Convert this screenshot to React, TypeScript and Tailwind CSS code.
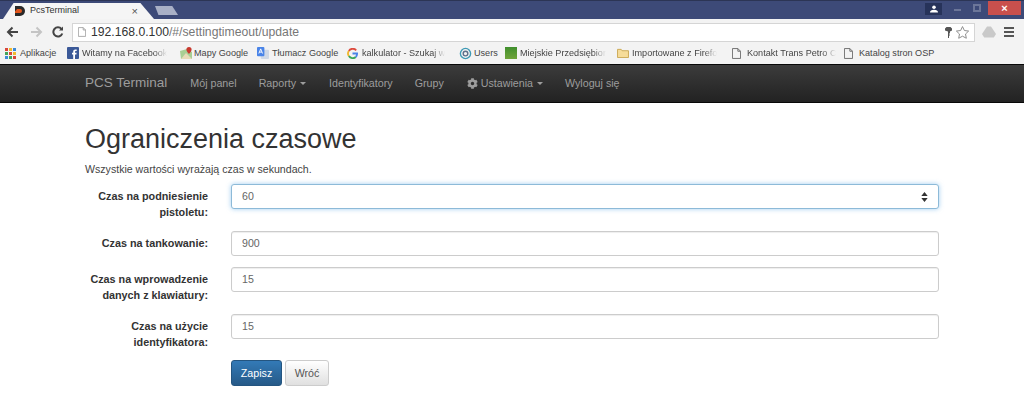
import { FaCog } from "react-icons/fa";

const font = "font-['Liberation_Sans',Arial,sans-serif]";

const bookmarks = [
  { name: "Aplikacje", width: "w-[62px]", icon: "apps" },
  { name: "Witamy na Facebook", width: "w-[112px]", icon: "fb", fade: true },
  { name: "Mapy Google", width: "w-[78px]", icon: "maps" },
  { name: "Tłumacz Google", width: "w-[90px]", icon: "translate" },
  { name: "kalkulator - Szukaj w", width: "w-[112px]", icon: "g", fade: true },
  { name: "Users", width: "w-[46px]", icon: "users" },
  { name: "Miejskie Przedsiębior", width: "w-[112px]", icon: "green", fade: true },
  { name: "Importowane z Firefo", width: "w-[115px]", icon: "folder", fade: true },
  { name: "Kontakt Trans Petro C", width: "w-[112px]", icon: "page", fade: true },
  { name: "Katalog stron OSP", width: "w-[100px]", icon: "page" },
];

function BookmarkIcon({ type }: { type: string }) {
  if (type === "apps") {
    const colors = ["#d9463a", "#f0b92f", "#3d8ad9", "#44a35a", "#d9463a", "#f0b92f", "#3d8ad9", "#44a35a", "#d9463a"];
    return (
      <svg width="11" height="11" viewBox="0 0 11 11">
        {colors.map((c, i) => (
          <rect key={i} x={(i % 3) * 4} y={Math.floor(i / 3) * 4} width="3" height="3" fill={c} />
        ))}
      </svg>
    );
  }
  if (type === "fb") {
    return (
      <svg width="12" height="12" viewBox="0 0 12 12">
        <rect width="12" height="12" rx="1" fill="#3b5998" />
        <path d="M8 12V7.4h1.4l.2-1.7H8V4.7c0-.5.2-.8.8-.8h.9V2.4H8.4C7 2.4 6.2 3.2 6.2 4.6v1.1H5v1.7h1.2V12z" fill="#fff" />
      </svg>
    );
  }
  if (type === "maps") {
    return (
      <svg width="14" height="14" viewBox="0 0 14 14">
        <path d="M1 5l7-2 5 3v7H2z" fill="#a9cf94" />
        <path d="M2 13l5-6 6 6z" fill="#e8dcb8" />
        <path d="M10 1a2.6 2.6 0 0 1 2.6 2.6C12.6 5.4 10 8 10 8S7.4 5.4 7.4 3.6A2.6 2.6 0 0 1 10 1z" fill="#c8392f" />
      </svg>
    );
  }
  if (type === "translate") {
    return (
      <svg width="12" height="13" viewBox="0 0 13 14">
        <rect x="4" y="3" width="9" height="10" rx="1" fill="#cfd8e6" />
        <rect x="0" y="0" width="8" height="10" rx="1" fill="#4a84e8" />
        <path d="M2 7l2-5 2 5M2.8 5.5h2.4" stroke="#fff" fill="none" />
      </svg>
    );
  }
  if (type === "g") {
    return (
      <svg width="11" height="11" viewBox="0 0 12 12" fill="none" strokeWidth="2">
        <path d="M10 2.500A5 5 0 0 0 2 3.200" stroke="#dd4b3e" />
        <path d="M2 3.200a5 5 0 0 0 0 5.600" stroke="#f1b82d" />
        <path d="M2 8.800a5 5 0 0 0 7.500 1" stroke="#3aa757" />
        <path d="M9.500 9.800A5 5 0 0 0 11 6H6" stroke="#4a84e8" />
      </svg>
    );
  }
  if (type === "users") {
    return (
      <svg width="13" height="13" viewBox="0 0 14 14" fill="none">
        <circle cx="7" cy="7" r="5.500" stroke="#3f9ab5" strokeWidth="1.500" />
        <circle cx="7" cy="7" r="2.500" stroke="#5c6f8a" strokeWidth="1.500" />
      </svg>
    );
  }
  if (type === "green") {
    return <div className="h-3 w-3 bg-gradient-to-b from-[#3f8f2d] to-[#6fa33a]" />;
  }
  if (type === "folder") {
    return (
      <svg width="12" height="10" viewBox="0 0 13 11">
        <path d="M.5 1.500h4l1 1.500h7v7.500H.5z" fill="#f6dc9a" stroke="#c9a650" />
      </svg>
    );
  }
  return (
    <svg width="9" height="11" viewBox="0 0 10 12" fill="none" stroke="#666">
      <path d="M.5.500h6l3 3v8h-9zM6.500.500v3h3" />
    </svg>
  );
}

function Caret() {
  return <span className="ml-[1px] border-x-[3px] border-t-[3px] border-x-transparent border-t-[#9d9d9d]" />;
}

function Field({ label, value, focused, rowClass }: { label: React.ReactNode; value: string; focused?: boolean; rowClass: string }) {
  return (
    <div className={`flex items-start ${rowClass}`}>
      <label className="mr-[23px] w-[123px] whitespace-nowrap pt-[4px] text-right text-[10.8px] font-bold leading-[16px] text-[#333]">
        {label}
      </label>
      <div className="relative w-[708px]">
        <input
          readOnly
          value={value}
          className={
            focused
              ? "block h-[25px] w-full rounded-[3px] border border-[#8dbad8] bg-white px-[10px] pb-[2px] text-[10.6px] text-[#666] shadow-[0_0_5px_rgba(102,175,233,0.6)] outline-none"
              : "block h-[25px] w-full rounded-[3px] border border-[#ccc] bg-white px-[10px] pb-[2px] text-[10.6px] text-[#666] shadow-[inset_0_1px_1px_rgba(0,0,0,0.07)] outline-none"
          }
        />
        {focused && (
          <svg width="7" height="10" viewBox="0 0 7 11" className="absolute right-[11px] top-[8px]" fill="#333">
            <path d="M3.500 0L7 4.300H0zM3.500 11L0 6.700h7z" />
          </svg>
        )}
      </div>
    </div>
  );
}

export default function App() {
  return (
    <div className={`h-[402px] w-[1024px] overflow-hidden bg-white ${font}`}>
      {/* browser title bar */}
      <div className="flex h-[19px] items-end justify-between border-t border-[#2c3555] bg-[#3d4a78] pl-[3px]">
        <div className="flex items-end">
          <div className="flex h-[16px] w-[151px] items-center bg-[#f5f5f5] pl-[11px] pr-[16px] [clip-path:polygon(0_100%,7%_0,91%_0,100%_100%)]">
            <svg width="12" height="12" viewBox="0 0 12 12" className="shrink-0">
              <path d="M1 1h5a5 5 0 0 1 0 10H1z" fill="#2a2a2a" />
              <path d="M3 4h3a2 2 0 0 1 0 4H1V6.500z" fill="#e2561d" />
            </svg>
            <span className="ml-[4px] flex-1 text-[9px] text-[#333]">PcsTerminal</span>
            <span className="text-[11px] leading-none text-[#555]">×</span>
          </div>
          <div className="mb-[4px] ml-[1px] h-[9px] w-[23px] bg-[#a9b0c6] [clip-path:polygon(0_0,75%_0,100%_100%,15%_100%)]" />
        </div>
        <div className="flex h-[18px] items-start">
          <div className="mr-[5px] mt-[2px] flex h-[12px] w-[17px] items-center justify-center bg-[#27335a]">
            <svg width="8" height="8" viewBox="0 0 8 8" fill="#fff">
              <circle cx="4" cy="2.200" r="1.800" />
              <path d="M0 7.500c0-2 1.500-2.800 4-2.800s4 .8 4 2.800z" />
            </svg>
          </div>
          <div className="flex h-[14px] w-[20px] items-center justify-center">
            <div className="mt-[4px] h-[2px] w-[7px] bg-[#6c7699]" />
          </div>
          <div className="mr-px flex h-[14px] w-[20px] items-center justify-center">
            <div className="h-[8px] w-[8px] border-2 border-[#6c7699]" />
          </div>
          <div className="mr-[3px] flex h-[14px] w-[33px] items-center justify-center bg-[#c9504d] text-[11px] font-bold leading-none text-white">
            ×
          </div>
        </div>
      </div>

      {/* browser toolbar */}
      <div className="flex h-[26px] items-center bg-[#f3f3f3] pl-[6px] pr-[10px]">
        <svg width="14" height="12" viewBox="0 0 14 12" fill="none" stroke="#444" strokeWidth="2" className="shrink-0">
          <path d="M12 6H2M6.500 1.500L2 6l4.500 4.500" />
        </svg>
        <svg width="14" height="12" viewBox="0 0 14 12" fill="none" stroke="#c4c4c4" strokeWidth="2" className="ml-[9px] shrink-0">
          <path d="M2 6h10M7.500 1.500L12 6l-4.500 4.500" />
        </svg>
        <svg width="12" height="12" viewBox="0 0 12 12" fill="none" stroke="#444" strokeWidth="2" className="ml-[9px] shrink-0">
          <path d="M10.300 7.500A4.600 4.600 0 1 1 9.500 3" />
          <path d="M11 .5v4H7" fill="#444" stroke="none" />
        </svg>
        <div className="ml-[8px] flex h-[19px] flex-1 items-center border border-[#d5d5d5] bg-white pl-[5px] pr-[4px]">
          <svg width="8" height="10" viewBox="0 0 10 12" fill="none" stroke="#999" className="shrink-0">
            <path d="M.5.500h6l3 3v8h-9zM6.500.500v3h3" />
          </svg>
          <span className="ml-[5px] flex-1 text-[12.2px] leading-none text-[#777]">
            <span className="text-[#333]">192.168.0.100</span>/#/settingtimeout/update
          </span>
          <svg width="7" height="11" viewBox="0 0 7 11" fill="#555" className="shrink-0">
            <path d="M1.500 0h4L7 1.500v2L5 4.500V6l-1 1 1 1-1 1v2H3V4.500L0 3.500v-2z" />
          </svg>
          <svg width="15" height="15" viewBox="0 0 24 24" fill="none" stroke="#888" strokeWidth="1.500" className="ml-[3px] shrink-0">
            <path d="M12 2.500l3 6.300 6.800.9-5 4.700 1.300 6.800-6.100-3.300-6.100 3.300 1.300-6.800-5-4.700 6.800-.9z" />
          </svg>
        </div>
        <svg width="14" height="12" viewBox="0 0 14 12" fill="#c9c9c9" className="ml-[7px] shrink-0">
          <path d="M5 .5h4l5 7.500-2.200 3.500H2.200L0 8z" />
        </svg>
        <div className="ml-[8px] flex h-[10px] w-[10px] flex-col justify-between">
          <div className="h-[2px] bg-[#555]" />
          <div className="h-[2px] bg-[#555]" />
          <div className="h-[2px] bg-[#555]" />
        </div>
      </div>

      {/* bookmarks bar */}
      <div className="flex h-[19px] items-start bg-[#f3f3f3] pl-[5px] pt-px">
        {bookmarks.map((b) => (
          <div key={b.name} className={`flex h-[14px] items-center whitespace-nowrap ${b.width}`}>
            <div className="flex w-[15px] shrink-0 items-center">
              <BookmarkIcon type={b.icon} />
            </div>
            <span
              className={
                b.fade
                  ? "text-[9.1px] leading-[14px] text-[#444] [mask-image:linear-gradient(to_right,black_85%,transparent)]"
                  : "text-[9.1px] leading-[14px] text-[#444]"
              }
            >
              {b.name}
            </span>
          </div>
        ))}
      </div>

      {/* app navbar */}
      <nav className="flex h-[39px] items-center border-y border-[#080808] bg-gradient-to-b from-[#3c3c3c] to-[#222] pl-[85px] text-[10.7px] text-[#9d9d9d]">
        <span className="mr-[23px] text-[13.5px]">PCS Terminal</span>
        <span className="mr-[22px]">Mój panel</span>
        <span className="mr-[23px] flex items-center gap-[3px]">
          Raporty
          <Caret />
        </span>
        <span className="mr-[22px]">Identyfikatory</span>
        <span className="mr-[23px]">Grupy</span>
        <span className="mr-[22px] flex items-center gap-[3px]">
          <FaCog size={11} />
          Ustawienia
          <Caret />
        </span>
        <span>Wyloguj się</span>
      </nav>

      {/* page content */}
      <main className="pl-[85px] pt-[20px]">
        <h1 className="text-[27px] font-normal leading-[32px] text-[#333]">Ograniczenia czasowe</h1>
        <p className="mt-[6px] text-[10.6px] leading-[16px] text-[#444]">Wszystkie wartości wyrażają czas w sekundach.</p>
        <div className="mt-[7px]">
          <Field label={<>Czas na podniesienie<br />pistoletu:</>} value="60" focused rowClass="mb-[11px]" />
          <Field label="Czas na tankowanie:" value="900" rowClass="mb-[11px]" />
          <Field label={<>Czas na wprowadzenie<br />danych z klawiatury:</>} value="15" rowClass="mb-[11px]" />
          <Field label={<>Czas na użycie<br />identyfikatora:</>} value="15" rowClass="mb-[10px]" />
          <div className="ml-[146px] flex gap-[3px]">
            <button className="h-[26px] w-[51px] rounded-[3px] border border-[#245580] bg-gradient-to-b from-[#337ab7] to-[#265a88] text-[10.7px] text-white">
              Zapisz
            </button>
            <button className="h-[26px] w-[44px] rounded-[3px] border border-[#ccc] bg-gradient-to-b from-white to-[#e0e0e0] text-[10.7px] text-[#555]">
              Wróć
            </button>
          </div>
        </div>
      </main>
    </div>
  );
}
